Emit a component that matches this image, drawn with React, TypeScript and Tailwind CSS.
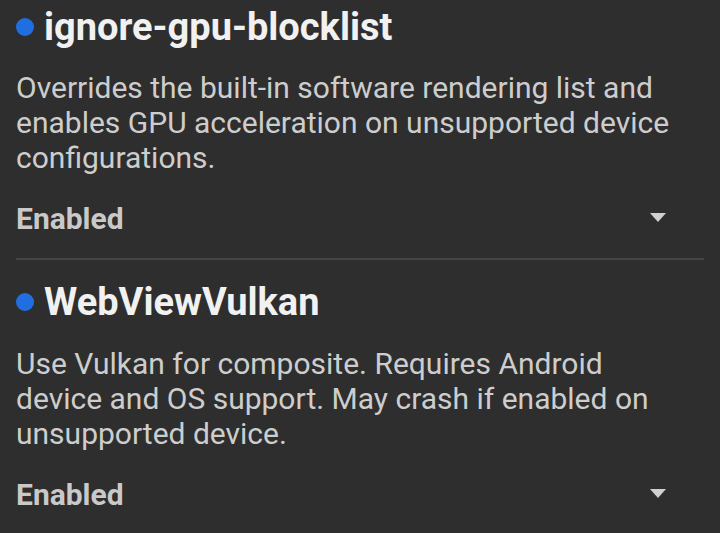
import React from 'react';

interface FlagProps {
  name: string;
  description: string;
  value: string;
  last?: boolean;
}

function Flag({ name, description, value, last }: FlagProps) {
  return (
    <div className={last ? 'pt-[22px]' : 'pb-[20px] border-b-2 border-[#444444]'}>
      <div className="flex items-center h-[40px]">
        <span className="w-[18px] h-[18px] rounded-full bg-[#1f6fe0] mr-[10px] shrink-0" />
        <h2 className="text-[38px] font-bold text-[#f1f1f1] leading-[40px]">{name}</h2>
      </div>
      <p className={`${last ? 'mt-[24px]' : 'mt-[23px]'} text-[30px] leading-[35px] text-[#cdcdcd] pr-[23px]`}>
        {description}
      </p>
      <div className="mt-[23px] flex items-center justify-between h-[40px]">
        <span className="text-[30px] font-bold text-[#c9c9c9]">{value}</span>
        <svg width="16" height="10" viewBox="0 0 16 10" className="mr-[38px]">
          <path d="M0 0 L16 0 L8 9 Z" fill="#d0d0d0" />
        </svg>
      </div>
    </div>
  );
}

export default function App() {
  return (
    <div
      className="w-[720px] h-[533px] overflow-hidden bg-[#2e2e2e] px-[16px] pt-[7px]"
      style={{ fontFamily: 'Roboto, "Noto Sans", sans-serif' }}
    >
      <Flag
        name="ignore-gpu-blocklist"
        description="Overrides the built-in software rendering list and enables GPU acceleration on unsupported device configurations."
        value="Enabled"
      />
      <Flag
        name="WebViewVulkan"
        description="Use Vulkan for composite. Requires Android device and OS support. May crash if enabled on unsupported device."
        value="Enabled"
        last
      />
    </div>
  );
}
